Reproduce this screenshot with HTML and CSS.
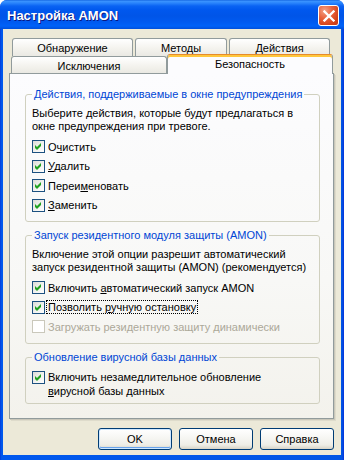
FILE: index.html
```html
<!DOCTYPE html>
<html lang="ru">
<head>
<meta charset="utf-8">
<title>Настройка AMON</title>
<link rel="stylesheet" href="styles.css">
</head>
<body>
<div class="window">
  <div class="titlebar">
    <span class="title">Настройка AMON</span>
    <span class="close">
      <svg width="12" height="12" viewBox="0 0 12 12"><path d="M1.5 1.5 L10.5 10.5 M10.5 1.5 L1.5 10.5" stroke="#fff" stroke-width="2.3" stroke-linecap="square"/></svg>
    </span>
  </div>
  <div class="body">
    <div class="tabs">
      <div class="tabrow row1">
        <div class="tab w-obn">Обнаружение</div>
        <div class="tab w-met">Методы</div>
        <div class="tab w-dei">Действия</div>
      </div>
      <div class="tabrow row2">
        <div class="tab w-isk">Исключения</div>
        <div class="tab sel w-bez">Безопасность</div>
      </div>
    </div>
    <div class="panel">
      <fieldset class="group">
        <legend>Действия, поддерживаемые в окне предупреждения</legend>
        <p class="desc">Выберите действия, которые будут предлагаться в<br>окне предупреждения при тревоге.</p>
        <div class="check"><span class="box on"><svg width="11" height="11" viewBox="0 0 11 11"><path d="M2 4 L4 6 L8 2 L8 5 L4 9 L2 7 Z" fill="#21A121"/></svg></span><span class="lbl">О<u>ч</u>истить</span></div>
        <div class="check"><span class="box on"><svg width="11" height="11" viewBox="0 0 11 11"><path d="M2 4 L4 6 L8 2 L8 5 L4 9 L2 7 Z" fill="#21A121"/></svg></span><span class="lbl"><u>У</u>далить</span></div>
        <div class="check"><span class="box on"><svg width="11" height="11" viewBox="0 0 11 11"><path d="M2 4 L4 6 L8 2 L8 5 L4 9 L2 7 Z" fill="#21A121"/></svg></span><span class="lbl">Переи<u>м</u>еновать</span></div>
        <div class="check"><span class="box on"><svg width="11" height="11" viewBox="0 0 11 11"><path d="M2 4 L4 6 L8 2 L8 5 L4 9 L2 7 Z" fill="#21A121"/></svg></span><span class="lbl"><u>З</u>аменить</span></div>
      </fieldset>
      <fieldset class="group">
        <legend>Запуск резидентного модуля защиты (AMON)</legend>
        <p class="desc">Включение этой опции разрешит автоматический<br>запуск резидентной защиты (AMON) (рекомендуется)</p>
        <div class="check"><span class="box on"><svg width="11" height="11" viewBox="0 0 11 11"><path d="M2 4 L4 6 L8 2 L8 5 L4 9 L2 7 Z" fill="#21A121"/></svg></span><span class="lbl">Включить <u>а</u>втоматический запуск AMON</span></div>
        <div class="check"><span class="box on"><svg width="11" height="11" viewBox="0 0 11 11"><path d="M2 4 L4 6 L8 2 L8 5 L4 9 L2 7 Z" fill="#21A121"/></svg></span><span class="lbl focus">Позволить <u>р</u>учную остановку</span></div>
        <div class="check disabled"><span class="box"></span><span class="lbl">Загружать резидентную защиту динамически</span></div>
      </fieldset>
      <fieldset class="group last">
        <legend>Обновление вирусной базы данных</legend>
        <div class="check multi"><span class="box on"><svg width="11" height="11" viewBox="0 0 11 11"><path d="M2 4 L4 6 L8 2 L8 5 L4 9 L2 7 Z" fill="#21A121"/></svg></span><span class="lbl">Включить незамедлительное обновление<br><u>в</u>ирусной базы данных</span></div>
      </fieldset>
    </div>
    <div class="buttons">
      <button class="btn def">OK</button>
      <button class="btn">Отмена</button>
      <button class="btn">Справка</button>
    </div>
  </div>
</div>
</body>
</html>
```

FILE: styles.css
```css
* { box-sizing: border-box; }
html, body { margin: 0; padding: 0; }
body {
  width: 344px;
  height: 460px;
  background: #ffffff;
  font-family: "Liberation Sans", Arial, sans-serif;
  font-size: 11px;
  color: #000;
}
.window {
  width: 344px;
  height: 460px;
  display: flex;
  flex-direction: column;
  background: linear-gradient(to right, #0831D9 0, #0055E5 1px, #0058EE 2px, #0055E5 calc(100% - 2px), #0831D9 100%);
  border-radius: 7px 7px 0 0;
  overflow: hidden;
}
.titlebar {
  height: 29px;
  flex: none;
  display: flex;
  align-items: center;
  justify-content: space-between;
  padding: 0 5px 0 7px;
  background: linear-gradient(to bottom, #0A5BDB 0, #3D95FF 1px, #2A85FC 3px, #0A63F3 6px, #0058EE 10px, #0055E8 16px, #005AF0 22px, #0062F8 26px, #0050DC 29px);
}
.title {
  color: #fff;
  font-weight: bold;
  font-size: 13px;
  text-shadow: 1px 1px 0 #0A1883;
  margin-top: 1px;
}
.close {
  width: 21px;
  height: 21px;
  border: 1px solid #fff;
  border-radius: 3px;
  background: radial-gradient(circle at 30% 25%, #F3A287 0, #E8623C 40%, #D2431A 75%, #C23812 100%);
  display: flex;
  align-items: center;
  justify-content: center;
  margin-top: 2px;
}
.close svg { display: block; }
.body {
  flex: 1;
  margin: 0 3px 5px;
  background: #ECE9D8;
  padding: 9px 7px 5px 6px;
  display: flex;
  flex-direction: column;
}
.tabs { flex: none; }
.tabrow { display: flex; align-items: flex-start; }
.row1 { height: 18px; padding-left: 3px; gap: 2px; }
.row2 { height: 17px; padding-left: 2px; }
.tab {
  height: 100%;
  border: 1px solid #919B9C;
  border-bottom: none;
  border-radius: 3px 3px 0 0;
  background: linear-gradient(#FFFFFF, #F4F3EE 55%, #EAE9E3);
  display: flex;
  align-items: center;
  justify-content: center;
  white-space: nowrap;
  padding-top: 1px;
}
.row2 .tab { height: 17px; }
.tab.sel {
  height: 20px;
  margin-top: -2px;
  margin-bottom: -1px;
  position: relative;
  z-index: 1;
  background: #FCFCFE;
  border-top: 1px solid #E68B2C;
  box-shadow: inset 0 2px 0 #FFC73C;
  padding-top: 0;
  padding-bottom: 2px;
}
.w-obn { width: 121px; }
.w-met { width: 92px; }
.w-dei { width: 101px; }
.w-isk { width: 156px; }
.w-bez { width: 166px; }
.panel {
  flex: 1;
  border: 1px solid #919B9C;
  background: linear-gradient(#FCFCFE, #F8F8F6 60%, #F3F2EC);
  padding: 14px 13px 0 15px;
  box-shadow: 1px 1px 0 #C9C7BA, 2px 2px 0 #DEDBCB;
}
.group {
  margin: 0;
  border: 1px solid #D0D0BF;
  border-radius: 3px;
  padding: 0 6px 6px 6px;
  min-width: 0;
}
.group + .group { margin-top: 7px; }
.group.last { padding-bottom: 5px; }
legend {
  padding: 0 2px;
  color: #0046D5;
  line-height: 13px;
}
.desc {
  margin: 6px 0 4px;
  line-height: 13px;
  white-space: nowrap;
}
.check {
  display: flex;
  align-items: center;
  height: 19.5px;
  white-space: nowrap;
}
.check.multi {
  align-items: flex-start;
  height: auto;
  line-height: 14px;
  margin-top: 6px;
}
.check.multi .box { margin-top: 1px; }
.box {
  width: 13px;
  height: 13px;
  flex: none;
  margin-right: 3px;
  border: 1px solid #1C5180;
  background: linear-gradient(135deg, #DCDCD7 0, #F2F2EF 55%, #FFFFFF 100%);
  display: flex;
  align-items: center;
  justify-content: center;
}
.box svg { display: block; }
.lbl u { text-decoration: underline; text-underline-offset: 1px; }
.lbl.focus {
  border: 1px dotted #000;
  padding: 0 1px 0 1px;
  margin-left: -2px;
  line-height: 12px;
}
.disabled .box {
  border-color: #CAC8BB;
  background: #FFFFFF;
}
.disabled .lbl { color: #ACA899; }
.buttons {
  flex: none;
  display: flex;
  justify-content: flex-end;
  gap: 7px;
  margin-top: 9px;
}
.btn {
  width: 74px;
  height: 22px;
  border: 1px solid #003C74;
  border-radius: 3px;
  background: linear-gradient(#FFFFFF 0, #F7F7F4 40%, #EEEDE6 80%, #D8D3C6 100%);
  font-family: "Liberation Sans", Arial, sans-serif;
  font-size: 11px;
  font-weight: normal;
  color: #000;
  padding: 0;
}
.btn.def {
  box-shadow: inset 0 0 0 1px #CEE7FF, inset 0 -1px 0 1px #69A3EC;
}
```
